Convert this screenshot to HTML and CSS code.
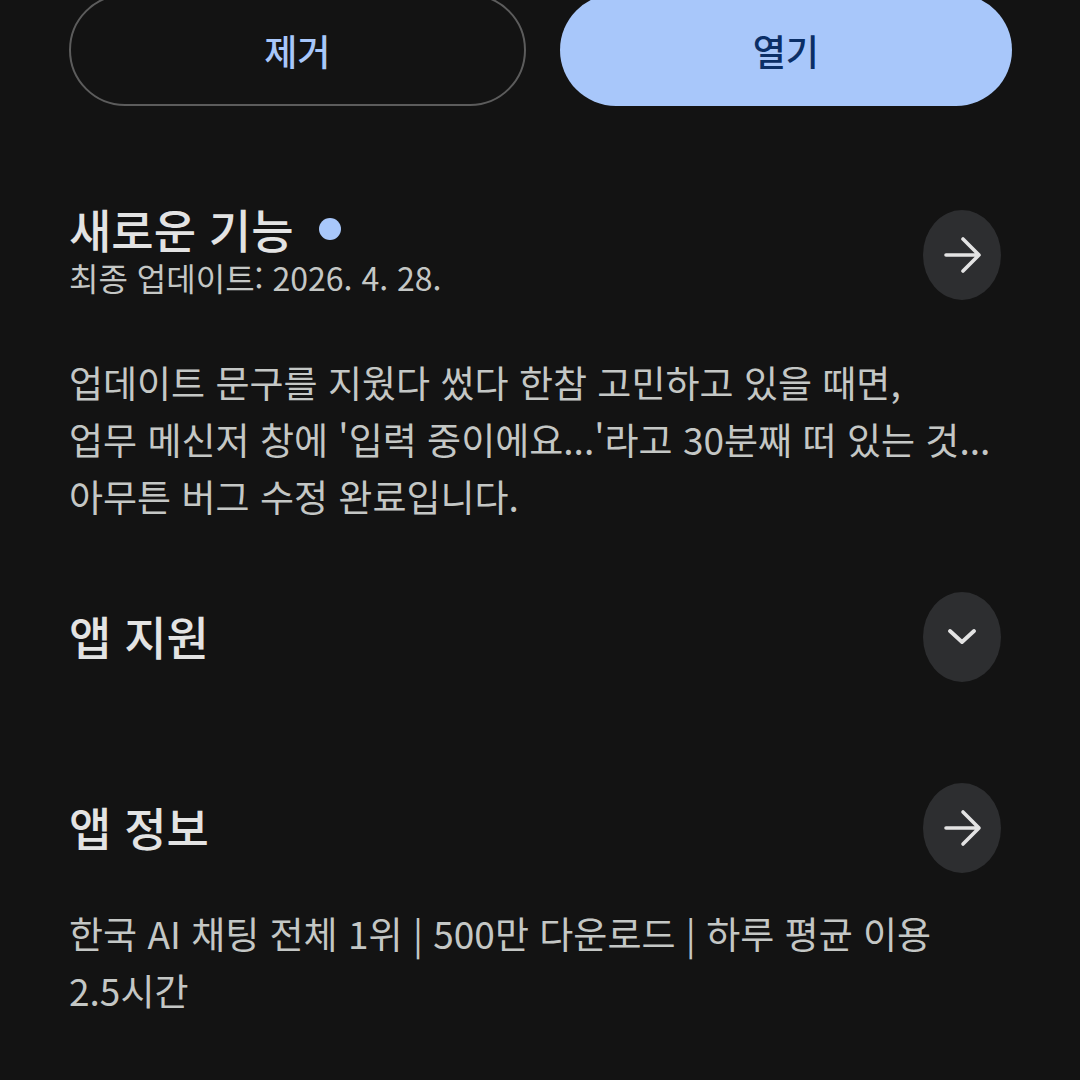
FILE: index.html
```html
<!DOCTYPE html>
<html lang="ko">
<head>
<meta charset="utf-8">
<link rel="stylesheet" href="styles.css">
</head>
<body>
<div class="page">
  <div class="actions">
    <button class="btn btn-outline">제거</button>
    <button class="btn btn-filled">열기</button>
  </div>

  <section class="whats-new">
    <div class="row row-news">
      <div class="head-text">
        <h2 class="title">새로운 기능<span class="dot"></span></h2>
        <div class="sub">최종 업데이트: 2026. 4. 28.</div>
      </div>
      <div class="circle circle-news">
        <svg viewBox="0 0 40 40" width="40" height="40"><path d="M4 20H37M21 4L37 20L21 36" fill="none" stroke="#e3e3e3" stroke-width="3.6" stroke-linecap="round" stroke-linejoin="round"/></svg>
      </div>
    </div>
    <p class="body-text">업데이트 문구를 지웠다 썼다 한참 고민하고 있을 때면,<br>업무 메신저 창에 '입력 중이에요...'라고 30분째 떠 있는 것...<br>아무튼 버그 수정 완료입니다.</p>
  </section>

  <section class="support">
    <div class="row">
      <h2 class="title">앱 지원</h2>
      <div class="circle">
        <svg viewBox="0 0 30 16" width="30" height="16"><path d="M3 2L15 13L27 2" fill="none" stroke="#e3e3e3" stroke-width="3.8" stroke-linecap="round" stroke-linejoin="round"/></svg>
      </div>
    </div>
  </section>

  <section class="about">
    <div class="row">
      <h2 class="title">앱 정보</h2>
      <div class="circle">
        <svg viewBox="0 0 40 40" width="40" height="40"><path d="M4 20H37M21 4L37 20L21 36" fill="none" stroke="#e3e3e3" stroke-width="3.6" stroke-linecap="round" stroke-linejoin="round"/></svg>
      </div>
    </div>
    <p class="body-text desc">한국 AI 채팅 전체 1위 | 500만 다운로드 | 하루 평균 이용<br>2.5시간</p>
  </section>
</div>
</body>
</html>
```

FILE: styles.css
```css
* { box-sizing: border-box; }
html, body {
  margin: 0;
  padding: 0;
  background: #131313;
  overflow: hidden;
}
body {
  font-family: "Noto Sans CJK KR", "Noto Sans", sans-serif;
  color: #e3e3e3;
}
.page {
  padding: 0 68px 0 69px;
  display: flex;
  flex-direction: column;
}
.actions {
  display: flex;
  gap: 34px;
  margin-top: -6px;
}
.btn {
  flex: 1;
  height: 112px;
  border-radius: 56px;
  font-family: "Noto Sans CJK KR", sans-serif;
  font-size: 36px;
  font-weight: 500;
  padding: 0;
  display: flex;
  align-items: center;
  justify-content: center;
}
.btn-outline {
  background: transparent;
  border: 2px solid #5c5c5c;
  color: #a8c7fa;
}
.btn-filled {
  background: #a8c7fa;
  border: none;
  color: #0b2f66;
}
.whats-new { margin-top: 99px; }
.row {
  display: flex;
  justify-content: space-between;
  align-items: center;
}
.row-news { align-items: flex-start; }
.head-text { display: flex; flex-direction: column; }
.title {
  margin: 0;
  font-size: 46px;
  font-weight: 500;
  line-height: 46px;
  padding-bottom: 4px;
  color: #e3e3e3;
  display: flex;
  align-items: center;
}
.dot {
  display: inline-block;
  width: 22px;
  height: 22px;
  border-radius: 50%;
  background: #a8c7fa;
  margin-left: 26px;
  margin-top: 2px;
}
.sub {
  font-size: 32px;
  line-height: 40px;
  padding-top: 2px;
  color: #c4c7c5;
}
.circle {
  width: 78px;
  height: 90px;
  border-radius: 50%;
  background: #2d2e30;
  display: flex;
  align-items: center;
  justify-content: center;
  margin-right: 11px;
  flex: none;
}
.circle-news { margin-top: 5px; }
.body-text {
  margin: 54px 0 0;
  font-size: 37px;
  line-height: 57px;
  color: #c4c7c5;
}
.support { margin-top: 67px; }
.about { margin-top: 101px; }
.desc { margin-top: 32px; }
```
